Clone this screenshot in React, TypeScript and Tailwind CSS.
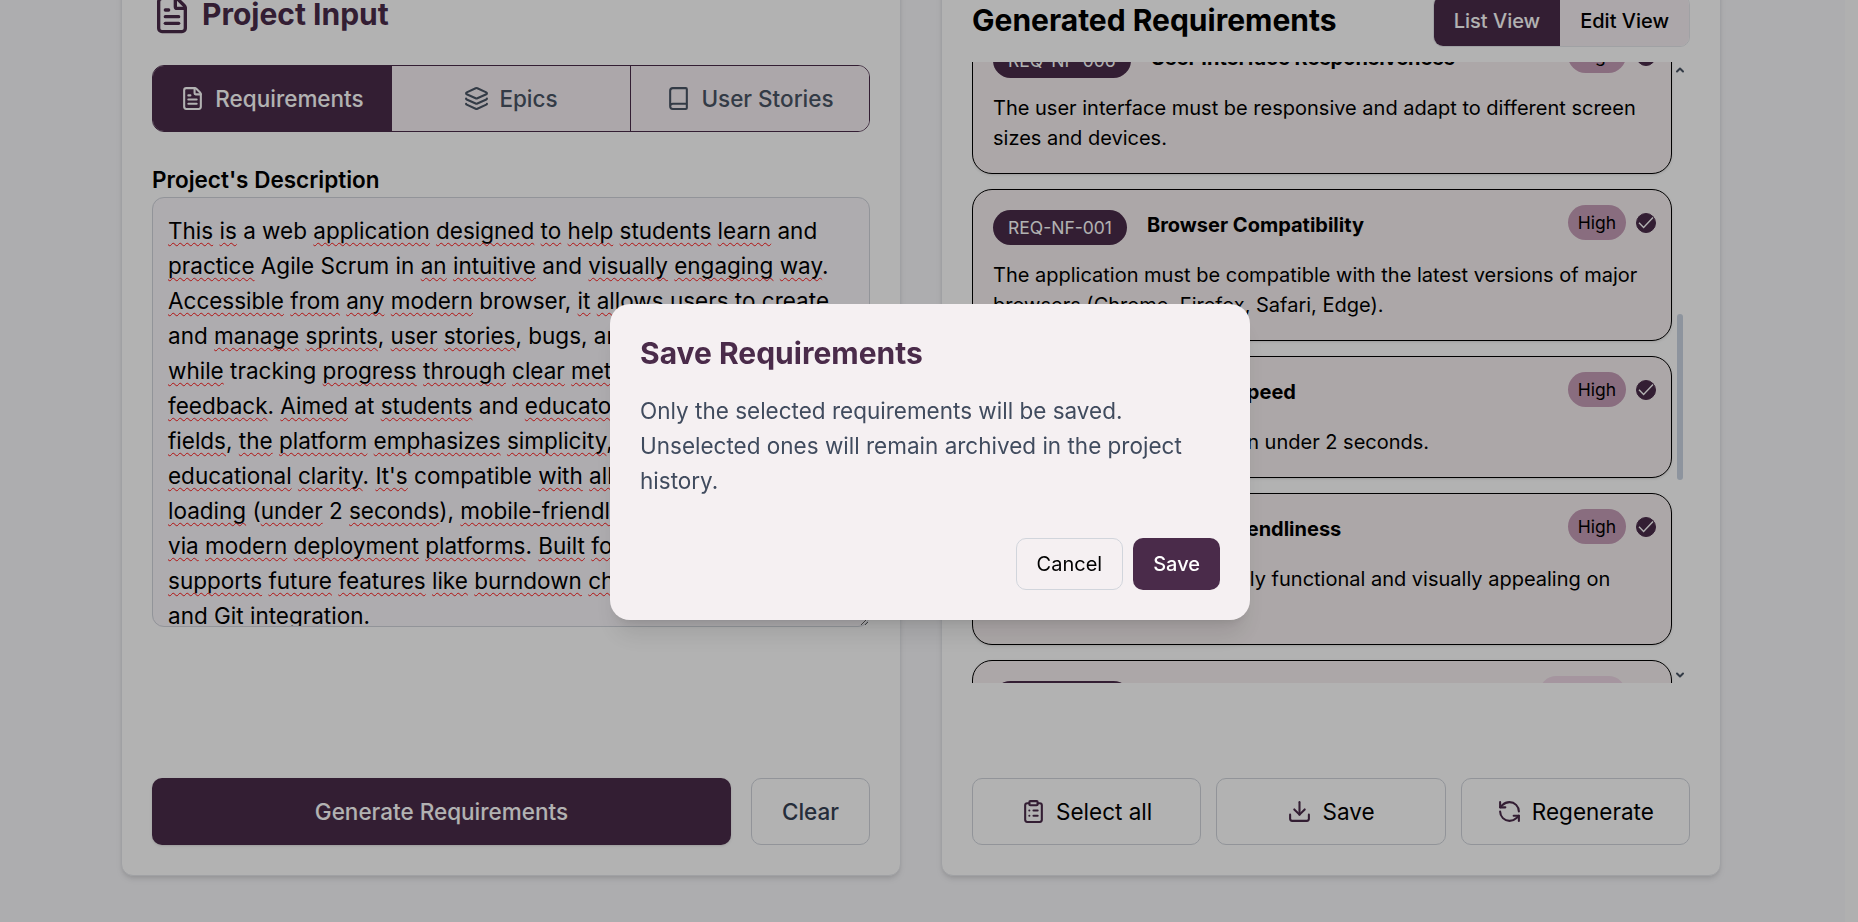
import { useLayoutEffect, useState } from "react";
import type { ReactNode } from "react";
import {
  Book,
  ChevronDown,
  ChevronUp,
  ClipboardList,
  Download,
  FileText,
  Layers,
  RefreshCcw,
} from "lucide-react";

type Priority = "High" | "Medium";

interface Requirement {
  id: string;
  title: string;
  description: string;
  priority: Priority;
  selected: boolean;
}

const REQUIREMENTS: Requirement[] = [
  {
    id: "REQ-NF-006",
    title: "User Interface Responsiveness",
    description: "The user interface must be responsive and adapt to different screen sizes and devices.",
    priority: "High",
    selected: true,
  },
  {
    id: "REQ-NF-001",
    title: "Browser Compatibility",
    description:
      "The application must be compatible with the latest versions of major browsers (Chrome, Firefox, Safari, Edge).",
    priority: "High",
    selected: true,
  },
  {
    id: "REQ-NF-002",
    title: "Loading Speed",
    description: "The application must load in under 2 seconds.",
    priority: "High",
    selected: true,
  },
  {
    id: "REQ-NF-003",
    title: "Mobile Friendliness",
    description: "The application must be fully functional and visually appealing on mobile devices.",
    priority: "High",
    selected: true,
  },
  {
    id: "REQ-NF-004",
    title: "Deployment",
    description: "The application must be deployable on modern deployment platforms.",
    priority: "Medium",
    selected: false,
  },
];

const DESCRIPTION =
  "This is a web application designed to help students learn and practice Agile Scrum in an intuitive and visually engaging way. Accessible from any modern browser, it allows users to create and manage sprints, user stories, bugs, and team collaboration while tracking progress through clear metrics and real-time feedback. Aimed at students and educators in software-related fields, the platform emphasizes simplicity, accessibility, and educational clarity. It's compatible with all devices with fast loading (under 2 seconds), mobile-friendly screens, and sharing via modern deployment platforms. Built for growth, the product supports future features like burndown charts, retrospectives, and Git integration.";

// Words the spell checker accepts; every other word gets a squiggle.
const KNOWN_WORDS = new Set([
  "a", "web", "and", "Agile", "Scrum", "in", "browser", "bugs", "tracking", "at", "compatible", "2", "Git",
]);

function SpellCheckLayer({ text }: { text: string }) {
  const parts = text.split(/([A-Za-z0-9'-]+)/);
  return (
    <div
      aria-hidden="true"
      className="pointer-events-none col-start-1 row-start-1 h-[430px] overflow-hidden rounded-[12px] border border-transparent bg-[#faf7fb] p-3 text-lg whitespace-pre-wrap text-transparent"
    >
      {parts.map((part, i) =>
        i % 2 === 1 && !KNOWN_WORDS.has(part) ? (
          <span
            key={i}
            className="underline decoration-[#ff1a1a] decoration-wavy decoration-1 underline-offset-[3px] [text-decoration-skip-ink:none]"
          >
            {part}
          </span>
        ) : (
          part
        ),
      )}
    </div>
  );
}

function Tab({ icon, label, active, last }: { icon: ReactNode; label: string; active?: boolean; last?: boolean }) {
  const tone = active ? "bg-[#4a2b4a] text-white" : "bg-[#f7f0f4] text-gray-600";
  const edge = last ? "" : "border-r border-[#4a2b4a]";
  return (
    <button
      type="button"
      className={`flex flex-1 basis-0 items-center justify-center gap-2 py-3 text-lg font-medium ${tone} ${edge}`}
    >
      {icon}
      {label}
    </button>
  );
}

function RequirementCard({ item }: { item: Requirement }) {
  const [selected, setSelected] = useState(item.selected);
  const pill = item.priority === "High" ? "bg-[#c59cb7]" : "bg-[#ecd6e4]";
  return (
    <li className="rounded-2xl border border-black bg-[#f7f0f1] p-4 shadow-sm">
      <div className="flex items-start gap-4">
        <span className="rounded-full bg-[#4a2b4a] px-3 py-1 text-sm text-white">{item.id}</span>
        <h3 className="flex-1 text-base font-bold">{item.title}</h3>
        <div className="-mt-1 -mr-1 flex items-center gap-2">
          <span className={`rounded-full px-2 py-1 text-sm ${pill}`}>{item.priority}</span>
          <label className="relative flex size-4 items-center justify-center">
            <input
              type="checkbox"
              aria-label={`Select ${item.id}`}
              checked={selected}
              onChange={(e) => setSelected(e.target.checked)}
              className="size-4 appearance-none rounded-full border border-[#4a2b4a] checked:bg-[#4a2b4a]"
            />
            {selected && (
              <svg
                viewBox="0 0 20 20"
                aria-hidden="true"
                className="pointer-events-none absolute inset-0 size-4 fill-none stroke-white"
              >
                <path d="M3 9.8 L7.6 14.4 L17 4.4" strokeWidth="1.4" />
              </svg>
            )}
          </label>
        </div>
      </div>
      <p className="mt-3 text-base">{item.description}</p>
    </li>
  );
}

function ActionButton({ icon, label }: { icon: ReactNode; label: string }) {
  return (
    <button
      type="button"
      className="flex items-center justify-center gap-2 rounded-lg border border-gray-300 py-3 text-lg"
    >
      {icon}
      {label}
    </button>
  );
}

export default function App() {
  const [description, setDescription] = useState(DESCRIPTION);

  // The whole interface is set on a 20px rem.
  useLayoutEffect(() => {
    document.documentElement.classList.add("text-xl");
    return () => document.documentElement.classList.remove("text-xl");
  }, []);

  return (
    <div className="flex h-screen overflow-hidden bg-[#f8f8fb] font-['Inter',sans-serif] text-base text-black">
      <main className="min-w-0 flex-1 pr-[3px]">
        <div className="mx-auto -mt-[36px] grid max-w-7xl grid-cols-2 gap-8">
          <section className="flex flex-col rounded-[12px] border border-gray-200 bg-white p-6 shadow-md">
            <h2 className="mb-6 flex items-center gap-2 text-2xl font-bold text-[#4a2b4a]">
              <FileText className="size-8" />
              Project Input
            </h2>
            <div className="mb-6 flex overflow-hidden rounded-[12px] border border-[#4a2b4a]">
              <Tab icon={<FileText className="size-5" />} label="Requirements" active />
              <Tab icon={<Layers className="size-5" />} label="Epics" />
              <Tab icon={<Book className="size-5" />} label="User Stories" last />
            </div>
            <label htmlFor="description" className="text-lg font-semibold">
              Project's Description
            </label>
            <div className="grid">
              <SpellCheckLayer text={description} />
              <textarea
                id="description"
                value={description}
                spellCheck={false}
                onChange={(e) => setDescription(e.target.value)}
                className="relative col-start-1 row-start-1 h-[430px] w-full resize-y overflow-hidden rounded-[12px] border border-gray-300 bg-transparent p-3 text-lg outline-none"
              />
            </div>
            <div className="mt-auto flex gap-4">
              <button
                type="button"
                className="flex-1 rounded-lg bg-[#4a2b4a] py-3 text-lg font-medium text-white shadow-sm"
              >
                Generate Requirements
              </button>
              <button
                type="button"
                className="rounded-lg border border-gray-300 px-6 py-3 text-lg font-medium text-gray-700"
              >
                Clear
              </button>
            </div>
          </section>

          <section className="flex flex-col rounded-[12px] border border-gray-200 bg-white p-6 shadow-md">
            <div className="mb-3 flex items-center justify-between">
              <h2 className="text-2xl font-bold">Generated Requirements</h2>
              <div className="flex overflow-hidden rounded-lg border border-gray-200">
                <button type="button" className="bg-[#4a2b4a] px-4 py-2 text-base font-medium text-white">
                  List View
                </button>
                <button type="button" className="bg-[#f7f0f4] px-4 py-2 text-base font-medium">
                  Edit View
                </button>
              </div>
            </div>
            <div className="flex h-[621px] gap-[3px] overflow-hidden">
              <ul className="-mt-8 flex flex-1 flex-col gap-3">
                {REQUIREMENTS.map((item) => (
                  <RequirementCard key={item.id} item={item} />
                ))}
              </ul>
              <div aria-hidden="true" className="mr-1 flex w-2 flex-col items-center py-[2px]">
                <ChevronUp className="size-[12px] text-gray-600" strokeWidth={4} />
                <div className="mt-[238px] h-[166px] w-[6px] rounded-full bg-slate-300" />
                <ChevronDown className="mt-auto size-[12px] text-gray-600" strokeWidth={4} />
              </div>
            </div>
            <div className="mt-[95px] grid grid-cols-3 gap-3">
              <ActionButton icon={<ClipboardList className="size-5 text-[#4a2b4a]" />} label="Select all" />
              <ActionButton icon={<Download className="size-5 text-[#4a2b4a]" />} label="Save" />
              <ActionButton icon={<RefreshCcw className="size-5 text-[#4a2b4a]" />} label="Regenerate" />
            </div>
          </section>
        </div>
      </main>
      <div aria-hidden="true" className="w-[13px] bg-[#fcfcfc]" />

      <div className="fixed inset-0 flex items-center justify-center bg-black/30 pt-[2px] pl-[2px]">
        <div
          role="dialog"
          aria-modal="true"
          aria-labelledby="dialog-title"
          className="w-full max-w-lg rounded-2xl bg-[#f5f0f2] p-6 shadow-xl"
        >
          <h2 id="dialog-title" className="text-2xl font-bold text-[#4a2b4a]">
            Save Requirements
          </h2>
          <p className="mt-4 text-lg text-[#404b5e]">
            Only the selected requirements will be saved. Unselected ones will remain archived in the project history.
          </p>
          <div className="mt-8 flex justify-end gap-2">
            <button type="button" className="rounded-lg border border-gray-300 px-4 py-2 text-base">
              Cancel
            </button>
            <button
              type="button"
              className="rounded-lg bg-[#4a2b4a] px-4 py-2 text-base font-medium text-white"
            >
              Save
            </button>
          </div>
        </div>
      </div>
    </div>
  );
}
